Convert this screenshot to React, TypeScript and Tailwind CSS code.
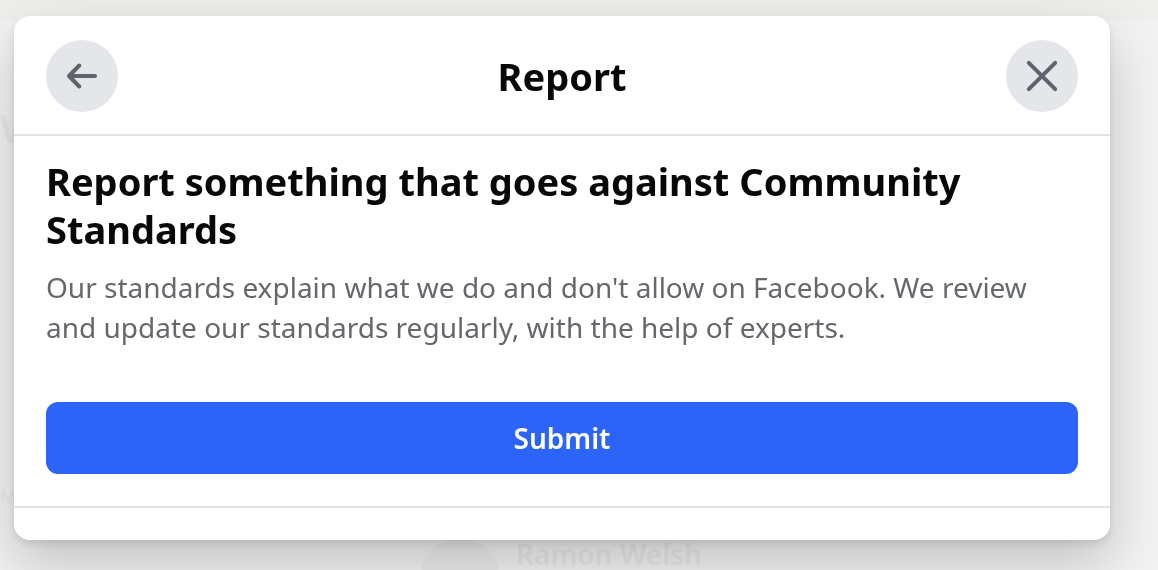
import { useState } from "react";

function BackIcon() {
  return (
    <svg
      viewBox="0 0 40 40"
      className="size-10"
      fill="none"
      stroke="currentColor"
      strokeWidth="4"
      strokeLinecap="round"
      strokeLinejoin="round"
      aria-hidden="true"
    >
      <path d="M33 20H7M17.300 9.500L7 20L17.300 30.500" />
    </svg>
  );
}

function CloseIcon() {
  return (
    <svg
      viewBox="0 0 40 40"
      className="size-10"
      fill="none"
      stroke="currentColor"
      strokeWidth="4"
      strokeLinecap="round"
      aria-hidden="true"
    >
      <path d="M6.800 6.800L33.200 33.200M33.200 6.800L6.800 33.200" />
    </svg>
  );
}

// Faded feed that stays visible around the dialog
function Feed() {
  return (
    <div
      aria-hidden="true"
      className="flex h-screen flex-col overflow-hidden bg-[#f2f2f2]"
    >
      <div className="h-5 bg-[#eeeeec]" />
      <div className="flex flex-1 flex-col justify-between pt-20 pb-7">
        <span className="text-[40px] leading-[56px] font-semibold text-[#e9e9e9]">
          W
        </span>
        <span className="text-lg leading-7 text-[#e9e9e9]">Ma</span>
      </div>
      <div className="flex items-center gap-4 pl-[420px]">
        <div className="-mb-12 size-20 rounded-full bg-[#ebebeb]" />
        <span className="text-[28px] leading-8 font-semibold text-[#e7e7e7]">
          Ramon Welsh
        </span>
      </div>
    </div>
  );
}

export default function App() {
  const [open, setOpen] = useState(true);

  return (
    <div className="font-['Noto_Sans',sans-serif]">
      <Feed />

      {open && (
        <div className="fixed inset-0 pt-4 pr-12 pl-[14px]">
          <div
            role="dialog"
            aria-labelledby="report-title"
            className="rounded-2xl bg-white shadow-[0_24px_56px_rgba(0,0,0,0.2),0_4px_8px_rgba(0,0,0,0.1)]"
          >
            <header className="flex items-center justify-between border-b-2 border-[#e2e2e3] px-8 pt-6 pb-[22px]">
              <button
                type="button"
                aria-label="Back"
                className="flex size-[72px] items-center justify-center rounded-full bg-[#e4e6ea] text-[#5f636b]"
              >
                <BackIcon />
              </button>
              <h1
                id="report-title"
                className="text-[38px] leading-[48px] font-bold text-[#080809]"
              >
                Report
              </h1>
              <button
                type="button"
                aria-label="Close"
                onClick={() => setOpen(false)}
                className="flex size-[72px] items-center justify-center rounded-full bg-[#e4e6ea] text-[#5f636b]"
              >
                <CloseIcon />
              </button>
            </header>

            <div className="border-b-2 border-[#e2e2e3] px-8 pt-[21px] pb-8">
              <h2 className="text-[38px] leading-[48px] font-bold text-[#080809]">
                Report something that goes against Community Standards
              </h2>
              <p className="mt-[14px] text-[28px] leading-10 text-[#65686c]">
                Our standards explain what we do and don't allow on Facebook. We
                review and update our standards regularly, with the help of
                experts.
              </p>
              <button
                type="button"
                className="mt-[55px] h-[72px] w-full rounded-xl bg-[#2b64f6] text-[28px] font-semibold text-white"
              >
                Submit
              </button>
            </div>

            <div className="h-8" />
          </div>
        </div>
      )}
    </div>
  );
}
